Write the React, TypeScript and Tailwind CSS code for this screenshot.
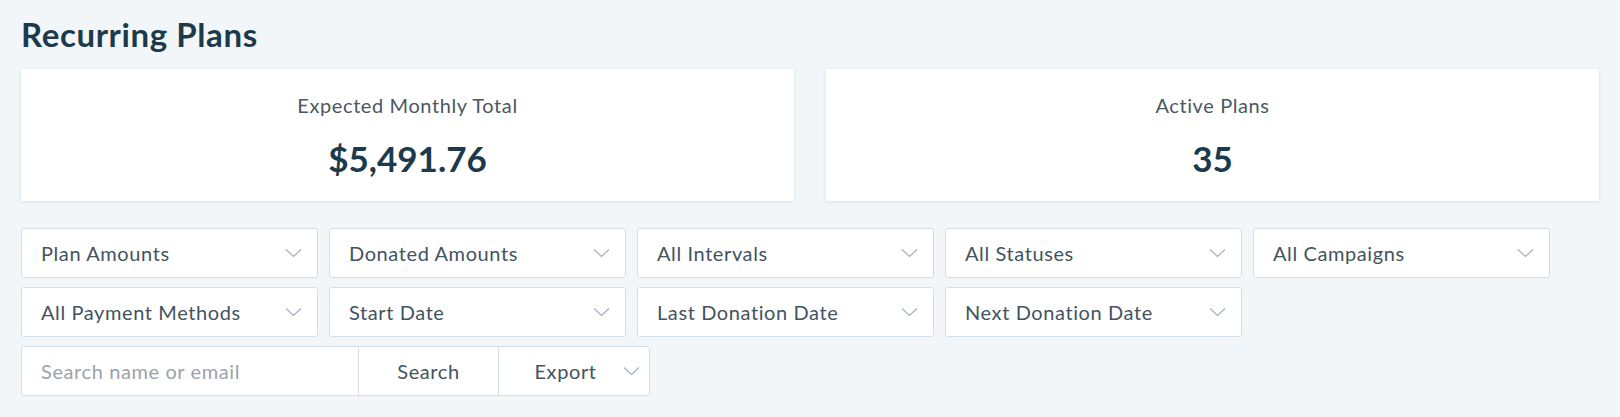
const filters = [
  "Plan Amounts",
  "Donated Amounts",
  "All Intervals",
  "All Statuses",
  "All Campaigns",
  "All Payment Methods",
  "Start Date",
  "Last Donation Date",
  "Next Donation Date",
];

const stats = [
  { label: "Expected Monthly Total", value: "$5,491.76" },
  { label: "Active Plans", value: "35" },
];

function Chevron({ className = "" }: { className?: string }) {
  return (
    <svg width="17" height="10" viewBox="0 0 17 10" fill="none" className={className}>
      <path d="M1 1.5 L8.5 8.5 L16 1.5" stroke="#a3aeb7" strokeWidth="1.1" />
    </svg>
  );
}

export default function App() {
  return (
    <div className="min-h-[417px] bg-[#f2f6f9] px-[21px] pt-[14px] font-['Lato',sans-serif] text-[#44535e]">
      <h1 className="text-[33px] font-bold leading-[40px] tracking-[0.6px] text-[#1c3a4b]">Recurring Plans</h1>

      {/* Stat cards */}
      <div className="mt-[15px] grid grid-cols-2 gap-[32px]">
        {stats.map((s) => (
          <div
            key={s.label}
            className="flex h-[132px] flex-col items-center bg-white pt-[24px] shadow-[0_1px_4px_rgba(30,70,110,0.12)]"
          >
            <div className="text-[20px] leading-[24px] tracking-[0.6px] text-[#4a5862]">{s.label}</div>
            <div className="mt-[21px] text-[35px] font-bold leading-[40px] text-[#1c3a4b]">{s.value}</div>
          </div>
        ))}
      </div>

      {/* Filters */}
      <div className="mt-[27px] flex w-[1540px] flex-wrap gap-x-[11px] gap-y-[9px]">
        {filters.map((f) => (
          <div
            key={f}
            className="flex h-[50px] w-[297px] items-center justify-between rounded-[3px] border border-[#d3dee6] bg-white pl-[19px] pr-[15px]"
          >
            <span className="text-[20px] tracking-[0.6px]">{f}</span>
            <Chevron />
          </div>
        ))}
      </div>

      {/* Search + export */}
      <div className="mt-[9px] flex h-[50px] w-[629px] rounded-[3px] border border-[#d3dee6] bg-white text-[20px] tracking-[0.6px]">
        <div className="flex w-[336px] items-center pl-[19px] text-[#9aa3aa]">Search name or email</div>
        <div className="flex w-[140px] items-center justify-center border-l border-[#d3dee6]">Search</div>
        <div className="relative flex flex-1 items-center justify-center border-l border-[#d3dee6] pr-[17px]">
          Export
          <Chevron className="absolute right-[9px]" />
        </div>
      </div>
    </div>
  );
}
